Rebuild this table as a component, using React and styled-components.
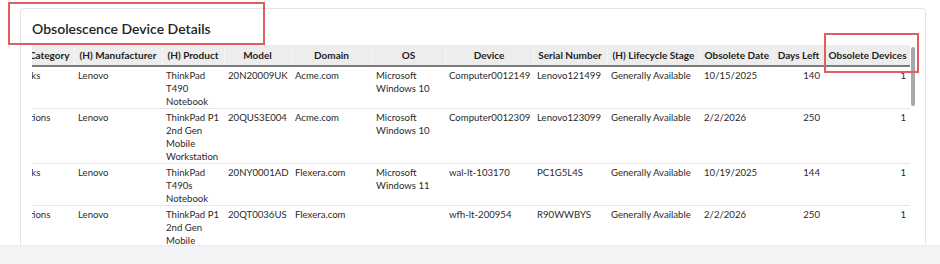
import React from "react";
import styled, { createGlobalStyle } from "styled-components";

const GlobalStyle = createGlobalStyle`
  html, body { margin: 0; padding: 0; background: #ffffff; }
  body { font-family: Lato, "Noto Sans", sans-serif; color: #252423; }
  * { box-sizing: border-box; }
`;

const Page = styled.div`
  position: relative;
  width: 940px;
  height: 264px;
  overflow: hidden;
  display: flex;
  flex-direction: column;
  background: #ffffff;
`;

const Stage = styled.div`
  height: 245px;
  flex: none;
  display: flex;
  padding: 8px 14px 0 20px;
`;

const Card = styled.section`
  flex: 1;
  min-height: 0;
  display: flex;
  flex-direction: column;
  border: 1px solid #e4e4e8;
  border-bottom: none;
  border-radius: 4px 4px 0 0;
  padding: 11px 9px 0 11px;
  background: #ffffff;
`;

const Title = styled.h2`
  margin: 0 0 7px;
  font-size: 14px;
  line-height: 18px;
  font-weight: 600;
  color: #252423;
  white-space: nowrap;
`;

const TableArea = styled.div`
  flex: 1;
  min-height: 0;
  display: flex;
  overflow: hidden;
`;

const Viewport = styled.div`
  width: 878px;
  flex: none;
  overflow: hidden;
`;

const Table = styled.table`
  margin-left: -42px;
  width: 920px;
  table-layout: fixed;
  border-collapse: collapse;
  border-spacing: 0;
`;

const HeadCell = styled.th`
  padding: 0 4px;
  line-height: 20px;
  font-size: 10px;
  font-weight: 700;
  color: #1f1f1f;
  background: #ededed;
  border-right: 1px solid #f6f6f6;
  border-bottom: 2px solid #7c7c7c;
  text-align: ${(p) => p.$align || "center"};
  white-space: nowrap;
  overflow: hidden;
`;

const Cell = styled.td`
  padding: 2px 4px 0;
  font-size: 9.6px;
  line-height: 13px;
  color: #2b2a29;
  vertical-align: top;
  border-bottom: 1px solid #e6e6e6;
  text-align: ${(p) => p.$align || "left"};
`;

const ScrollTrack = styled.div`
  width: 6px;
  flex: none;
  padding: 2px 0 0 1px;
`;

const Thumb = styled.div`
  width: 4px;
  height: 59px;
  border-radius: 2px;
  background: #a8a8a8;
`;

const Footer = styled.div`
  flex: 1;
  background: #f3f3f5;
  border-top: 1px solid #ebebee;
`;

const Annotation = styled.div`
  position: absolute;
  left: ${(p) => p.$x}px;
  top: ${(p) => p.$y}px;
  width: ${(p) => p.$w}px;
  height: ${(p) => p.$h}px;
  border: 2px solid #e35d60;
  pointer-events: none;
`;

const columns = [
  { key: "category", label: "(H) Category", width: 84, headAlign: "right" },
  { key: "manufacturer", label: "(H) Manufacturer", width: 88 },
  { key: "product", label: "(H) Product", width: 62 },
  { key: "model", label: "Model", width: 67 },
  { key: "domain", label: "Domain", width: 81 },
  { key: "os", label: "OS", width: 73 },
  { key: "device", label: "Device", width: 88 },
  { key: "serial", label: "Serial Number", width: 74 },
  { key: "lifecycle", label: "(H) Lifecycle Stage", width: 93 },
  { key: "obsDate", label: "Obsolete Date", width: 73 },
  { key: "daysLeft", label: "Days Left", width: 51, align: "right" },
  { key: "obsDevices", label: "Obsolete Devices", width: 86, align: "right" },
];

const rows = [
  {
    category: "Notebooks",
    manufacturer: "Lenovo",
    product: "ThinkPad T490 Notebook",
    model: "20N20009UK",
    domain: "Acme.com",
    os: "Microsoft Windows 10",
    device: "Computer0012149",
    serial: "Lenovo121499",
    lifecycle: "Generally Available",
    obsDate: "10/15/2025",
    daysLeft: 140,
    obsDevices: 1,
  },
  {
    category: "Workstations",
    manufacturer: "Lenovo",
    product: "ThinkPad P1 2nd Gen Mobile Workstation",
    model: "20QUS3E004",
    domain: "Acme.com",
    os: "Microsoft Windows 10",
    device: "Computer0012309",
    serial: "Lenovo123099",
    lifecycle: "Generally Available",
    obsDate: "2/2/2026",
    daysLeft: 250,
    obsDevices: 1,
  },
  {
    category: "Notebooks",
    manufacturer: "Lenovo",
    product: "ThinkPad T490s Notebook",
    model: "20NY0001AD",
    domain: "Flexera.com",
    os: "Microsoft Windows 11",
    device: "wal-lt-103170",
    serial: "PC1G5L4S",
    lifecycle: "Generally Available",
    obsDate: "10/19/2025",
    daysLeft: 144,
    obsDevices: 1,
  },
  {
    category: "Workstations",
    manufacturer: "Lenovo",
    product: "ThinkPad P1 2nd Gen Mobile Workstation",
    model: "20QT0036US",
    domain: "Flexera.com",
    os: "",
    device: "wfh-lt-200954",
    serial: "R90WWBYS",
    lifecycle: "Generally Available",
    obsDate: "2/2/2026",
    daysLeft: 250,
    obsDevices: 1,
  },
];

export default function App() {
  return (
    <>
      <GlobalStyle />
      <Page>
        <Stage>
          <Card>
            <Title>Obsolescence Device Details</Title>
            <TableArea>
              <Viewport>
                <Table>
                  <colgroup>
                    {columns.map((c) => (
                      <col key={c.key} style={{ width: c.width }} />
                    ))}
                  </colgroup>
                  <thead>
                    <tr>
                      {columns.map((c) => (
                        <HeadCell key={c.key} $align={c.headAlign}>
                          {c.label}
                        </HeadCell>
                      ))}
                    </tr>
                  </thead>
                  <tbody>
                    {rows.map((r, i) => (
                      <tr key={i}>
                        {columns.map((c) => (
                          <Cell key={c.key} $align={c.align}>
                            {r[c.key]}
                          </Cell>
                        ))}
                      </tr>
                    ))}
                  </tbody>
                </Table>
              </Viewport>
              <ScrollTrack>
                <Thumb />
              </ScrollTrack>
            </TableArea>
          </Card>
        </Stage>
        <Footer />
        <Annotation $x={8} $y={2} $w={257} $h={43} />
        <Annotation $x={824} $y={33} $w={95} $h={40} />
      </Page>
    </>
  );
}
